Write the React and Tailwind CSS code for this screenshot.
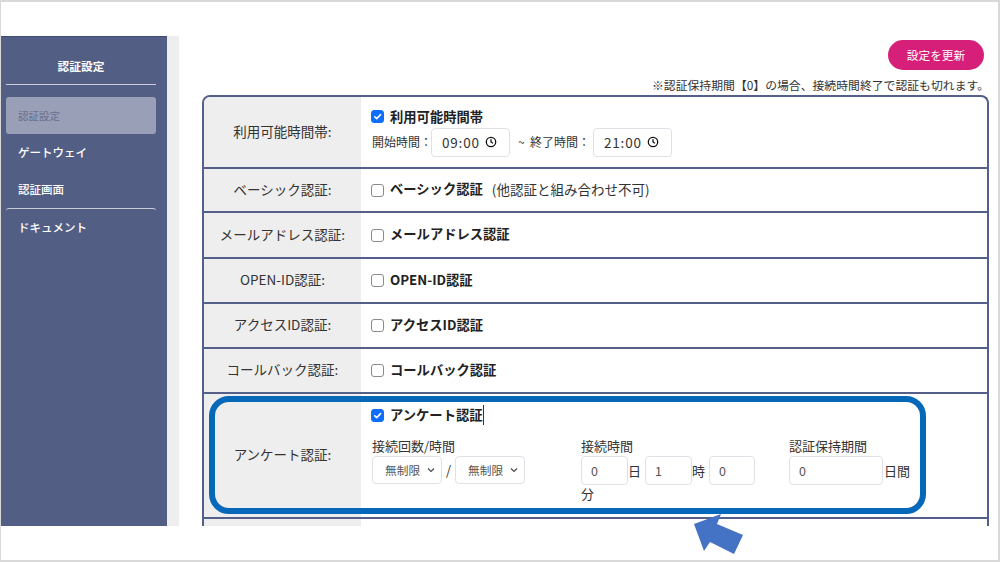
import React from 'react';

const FONT = "font-['Noto_Sans_CJK_JP','Noto_Sans',sans-serif]";

const Check = ({ checked }) => (
  <span className={`flex h-[13px] w-[13px] shrink-0 items-center justify-center rounded-[3px] border ${checked ? 'border-[#0d6efd] bg-[#0d6efd]' : 'border-[#8a8a8a] bg-white'}`}>
    {checked && (
      <svg width="11" height="11" viewBox="0 0 20 20" fill="none">
        <path d="M5 10.5l3.5 3.5L15.5 6.5" stroke="#fff" strokeWidth="3" strokeLinecap="round" strokeLinejoin="round" />
      </svg>
    )}
  </span>
);

const Clock = () => (
  <svg width="12" height="12" viewBox="0 0 12 12" fill="none" stroke="#111" strokeWidth="1.3">
    <circle cx="6" cy="6" r="4.7" />
    <path d="M6 3.2V6l2 1.3" />
  </svg>
);

const TimeBox = ({ value }) => (
  <span className="flex h-[29px] w-[79px] shrink-0 items-center justify-between rounded-[4px] border border-[#dee2e6] pl-[10px] pr-[12px] text-[13.5px] tracking-[0.8px] text-[#333]">
    {value}
    <Clock />
  </span>
);

const NumBox = ({ value, className }) => (
  <span className={`inline-flex h-[29px] items-center rounded-[4px] border border-[#dee2e6] pl-[9px] text-[12.5px] text-[#555] ${className}`}>
    {value}
  </span>
);

const SelectBox = () => (
  <span className="flex h-[28px] w-[70px] items-center justify-between rounded-[4px] border border-[#dee2e6] pl-[12px] pr-[6px] text-[11.7px] text-[#555]">
    無制限
    <svg width="8" height="6" viewBox="0 0 8 6" fill="none" stroke="#444" strokeWidth="1.1">
      <path d="M1 1.5l3 3 3-3" />
    </svg>
  </span>
);

const Row = ({ label, height, children, last }) => (
  <div className={`flex ${height} ${last ? '' : 'border-b-2 border-[#54608a]'}`}>
    <div className="flex w-[157px] shrink-0 items-center justify-center bg-[#eeeeee] pb-[2px] text-[13.5px] text-[#333]">
      {label}
    </div>
    <div className="min-w-0 flex-1 pl-[10px]">{children}</div>
  </div>
);

const SimpleCheck = ({ title, note }) => (
  <div className="flex h-full items-center gap-[6px]">
    <Check />
    <span className="pb-[2px] text-[13.3px] font-bold text-[#222]">{title}</span>
    {note && <span className="ml-[3px] pb-[2px] text-[13.5px] text-[#333]">{note}</span>}
  </div>
);

const Sidebar = () => (
  <aside className="flex w-[166px] shrink-0 flex-col border-t border-[#3f4a75] bg-[#535e85] pl-[5px] pr-[11px] text-[11.5px] text-white">
    <div className="flex h-[48px] items-center justify-center border-b border-[#c9cddb] pt-[10px] text-[11.7px] font-bold">
      認証設定
    </div>
    <div className="mt-[12px] flex h-[37px] items-center rounded-[3px] bg-[#9a9fb8] pl-[12px] text-[10.5px] text-[#66708f]">
      認証設定
    </div>
    <div className="flex h-[37px] items-center pl-[12px] font-medium">ゲートウェイ</div>
    <div className="flex h-[37px] items-center pl-[12px] font-medium">認証画面</div>
    <div className="flex h-[38px] items-center rounded-t-[3px] border-t border-[#c9cddb] pl-[12px] font-medium">
      ドキュメント
    </div>
  </aside>
);

export default function App() {
  return (
    <div className={`relative h-[562px] w-[1000px] overflow-hidden border-2 border-[#d9d9d9] border-l-[1px] bg-white ${FONT}`}>
      <div className="mt-[34px] flex h-[490px] overflow-hidden">
        <Sidebar />
        <div className="w-[12px] shrink-0 bg-[#eeeeee]" />
        <main className="flex min-w-0 flex-1 flex-col">
          <div className="flex h-[38px] items-start justify-end pr-[14px] pt-[4px]">
            <button className="flex h-[30px] w-[96px] items-center justify-center rounded-full bg-[#d61f78] text-[11.7px] text-white">
              設定を更新
            </button>
          </div>
          <p className="h-[21px] pr-[9px] pt-[2px] text-right text-[11.85px] leading-[17px] text-[#333]">
            ※認証保持期間【0】の場合、接続時間終了で認証も切れます。
          </p>
          <div className="ml-[23px] mr-[9px] flex-1 overflow-hidden rounded-t-[8px] border-x-2 border-t-2 border-[#54608a]">
            <Row label="利用可能時間帯:" height="h-[72px]">
              <div className="flex items-center gap-[6px] pt-[10px]">
                <Check checked />
                <span className="text-[13.3px] font-bold text-[#222]">利用可能時間帯</span>
              </div>
              <div className="mt-[1px] flex items-center whitespace-nowrap text-[12px] text-[#333]">
                <span className="ml-px w-[59px]">開始時間：</span>
                <TimeBox value="09:00" />
                <span className="ml-[8px] w-[75px]">~&nbsp;&nbsp;終了時間：</span>
                <TimeBox value="21:00" />
              </div>
            </Row>
            <Row label="ベーシック認証:" height="h-[44px]">
              <SimpleCheck title="ベーシック認証" note="(他認証と組み合わせ不可)" />
            </Row>
            <Row label="メールアドレス認証:" height="h-[46px]">
              <SimpleCheck title="メールアドレス認証" />
            </Row>
            <Row label="OPEN-ID認証:" height="h-[45px]">
              <SimpleCheck title="OPEN-ID認証" />
            </Row>
            <Row label="アクセスID認証:" height="h-[45px]">
              <SimpleCheck title="アクセスID認証" />
            </Row>
            <Row label="コールバック認証:" height="h-[45px]">
              <SimpleCheck title="コールバック認証" />
            </Row>
            <Row label="アンケート認証:" height="h-[125px]">
              <div className="flex items-center gap-[6px] pt-[11px]">
                <Check checked />
                <span className="border-r border-[#333] text-[13.3px] font-bold leading-[20px] text-[#222]">アンケート認証</span>
              </div>
              <div className="mt-[12px] flex text-[13px] leading-[18px] text-[#333]">
                <div className="w-[210px] pl-px">
                  <div>接続回数/時間</div>
                  <div className="mt-[1px] flex items-center gap-[4px]">
                    <SelectBox />
                    <span>/</span>
                    <SelectBox />
                  </div>
                </div>
                <div className="w-[208px]">
                  <div>接続時間</div>
                  <div className="mt-[1px] flex items-center">
                    <NumBox value="0" className="w-[47px]" />
                    <span className="w-[17px]">日</span>
                    <NumBox value="1" className="w-[47px]" />
                    <span className="w-[17px]">時</span>
                    <NumBox value="0" className="w-[46px]" />
                  </div>
                  <div>分</div>
                </div>
                <div>
                  <div>認証保持期間</div>
                  <div className="mt-[1px] flex items-center">
                    <NumBox value="0" className="w-[94px]" />
                    <span className="ml-px">日間</span>
                  </div>
                </div>
              </div>
            </Row>
            <Row label="" height="h-[20px]" last />
          </div>
        </main>
      </div>

      {/* annotation over the screenshot */}
      <div className="absolute left-[208px] top-[394px] h-[118px] w-[717px] rounded-[20px] border-[6px] border-[#0568b8]" />
      <svg className="absolute left-[693px] top-[512px]" width="50" height="41" viewBox="0 0 50 41">
        <path d="M0 10L27 0 23 10 49 21 40 40 16 28 10 37z" fill="#4472c4" />
      </svg>
    </div>
  );
}
